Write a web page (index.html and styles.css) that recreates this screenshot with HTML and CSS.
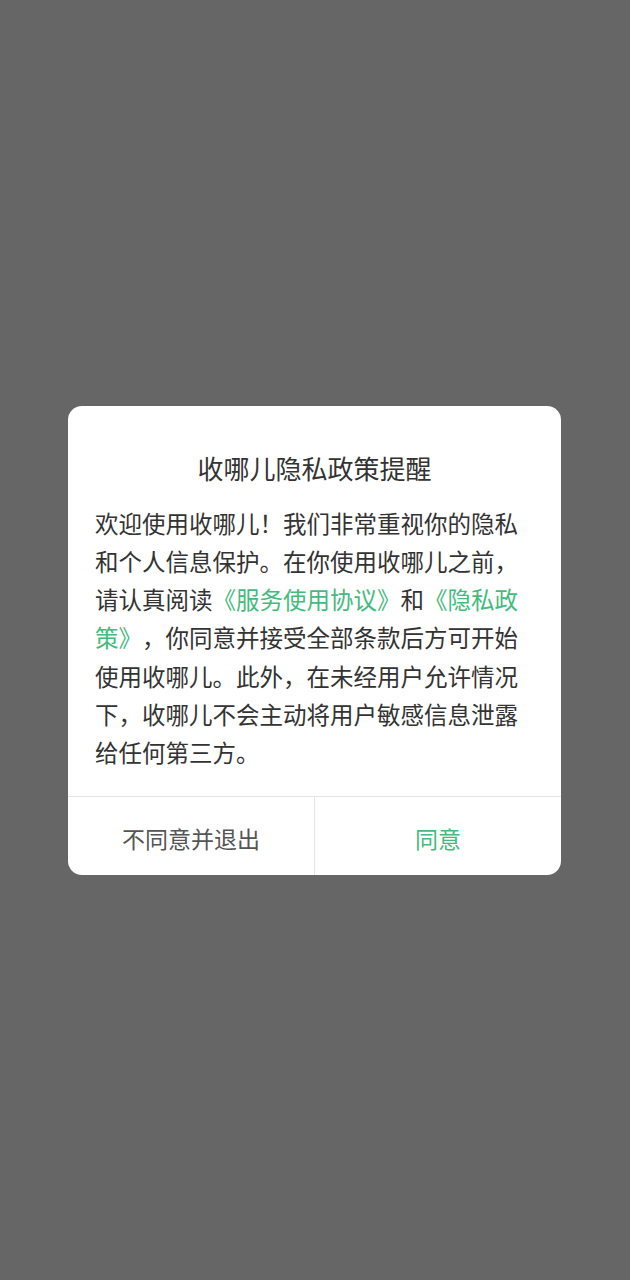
FILE: index.html
```html
<!DOCTYPE html>
<html lang="zh-CN">
<head>
<meta charset="utf-8">
<title>收哪儿隐私政策提醒</title>
<link rel="stylesheet" href="styles.css">
</head>
<body>
<div class="overlay">
  <div class="dialog">
    <h1 class="title">收哪儿隐私政策提醒</h1>
    <p class="content">欢迎使用收哪儿！我们非常重视你的隐私和个人信息保护。在你使用收哪儿之前，请认真阅读<span class="link">《服务使用协议》</span>和<span class="link">《隐私政</span><span class="link">策》</span>，你同意并接受全部条款后方可开始使用收哪儿。此外，在未经用户允许情况下，收哪儿不会主动将用户敏感信息泄露给任何第三方。</p>
    <div class="actions">
      <div class="btn btn-cancel">不同意并退出</div>
      <div class="btn btn-ok">同意</div>
    </div>
  </div>
</div>
</body>
</html>
```

FILE: styles.css
```css
* { box-sizing: border-box; }
html, body {
  margin: 0;
  padding: 0;
  height: 100%;
}
body {
  background: #666666;
  font-family: "Noto Sans CJK SC", "Noto Sans", sans-serif;
}
.overlay {
  width: 630px;
  height: 1280px;
  display: flex;
  align-items: center;
  justify-content: flex-start;
  padding-left: 68px;
}
.dialog {
  width: 493px;
  height: 469px;
  background: #ffffff;
  border-radius: 14px;
  display: flex;
  flex-direction: column;
  overflow: hidden;
}
.title {
  margin: 0;
  padding-top: 44px;
  font-size: 26px;
  line-height: 36px;
  font-weight: 400;
  color: #333333;
  text-align: center;
  text-spacing-trim: space-all;
}
.content {
  margin: 18px 0 0 0;
  padding: 0 27px;
  font-size: 23.5px;
  line-height: 38.3px;
  color: #333333;
  text-align: left;
  flex: 1;
  text-spacing-trim: space-all;
}
.link { color: #44bb7e; }
.actions {
  display: flex;
  height: 79px;
  border-top: 1px solid #e6e6e6;
}
.btn {
  flex: 1;
  display: flex;
  align-items: center;
  justify-content: center;
  font-size: 23px;
  padding-top: 4px;
}
.btn-cancel {
  color: #555555;
  border-right: 1px solid #e6e6e6;
}
.btn-ok { color: #44bb7e; }
```
